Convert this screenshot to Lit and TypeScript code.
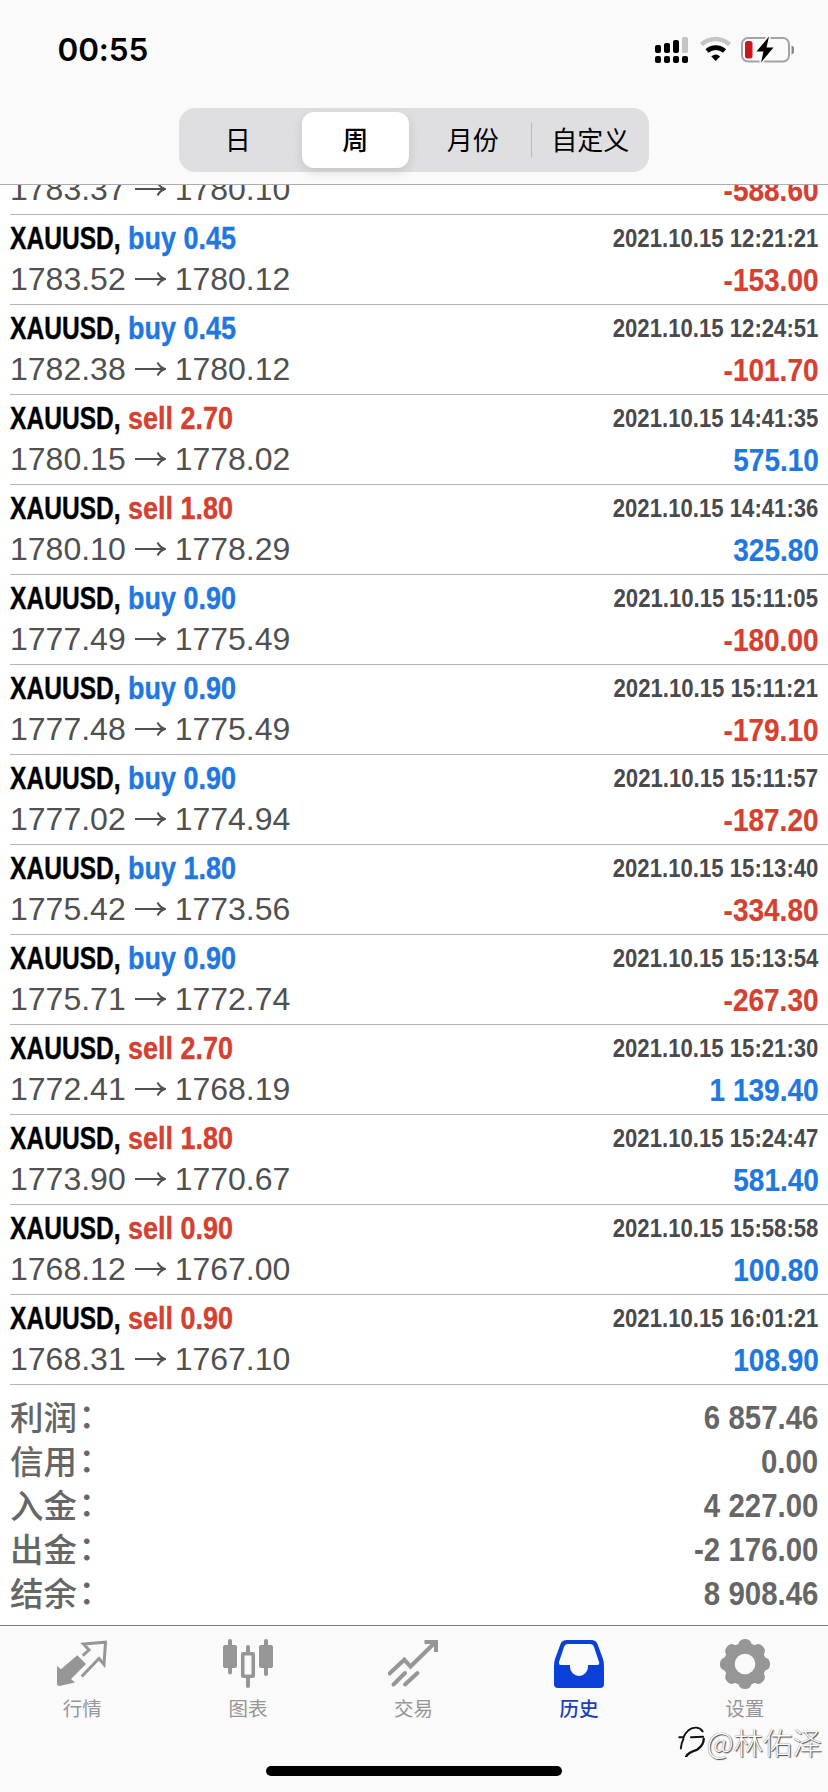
import { LitElement, html, css, svg, nothing } from "lit";
import { customElement, property } from "lit/decorators.js";

interface Deal {
  side?: "buy" | "sell";
  volume?: string;
  open: string;
  close: string;
  time?: string;
  profit: string;
}

const deal = (side: "buy" | "sell", volume: string, open: string, close: string, time: string, profit: string): Deal => ({
  side, volume, open, close, time: `2021.10.15 ${time}`, profit,
});

const DEALS: Deal[] = [
  { open: "1783.37", close: "1780.10", profit: "-588.60" },
  deal("buy", "0.45", "1783.52", "1780.12", "12:21:21", "-153.00"),
  deal("buy", "0.45", "1782.38", "1780.12", "12:24:51", "-101.70"),
  deal("sell", "2.70", "1780.15", "1778.02", "14:41:35", "575.10"),
  deal("sell", "1.80", "1780.10", "1778.29", "14:41:36", "325.80"),
  deal("buy", "0.90", "1777.49", "1775.49", "15:11:05", "-180.00"),
  deal("buy", "0.90", "1777.48", "1775.49", "15:11:21", "-179.10"),
  deal("buy", "0.90", "1777.02", "1774.94", "15:11:57", "-187.20"),
  deal("buy", "1.80", "1775.42", "1773.56", "15:13:40", "-334.80"),
  deal("buy", "0.90", "1775.71", "1772.74", "15:13:54", "-267.30"),
  deal("sell", "2.70", "1772.41", "1768.19", "15:21:30", "1 139.40"),
  deal("sell", "1.80", "1773.90", "1770.67", "15:24:47", "581.40"),
  deal("sell", "0.90", "1768.12", "1767.00", "15:58:58", "100.80"),
  deal("sell", "0.90", "1768.31", "1767.10", "16:01:21", "108.90"),
];

const TOTALS = [
  ["利润", "6 857.46"],
  ["信用", "0.00"],
  ["入金", "4 227.00"],
  ["出金", "-2 176.00"],
  ["结余", "8 908.46"],
];

@customElement("status-bar")
class StatusBar extends LitElement {
  static styles = css`
    :host { display: flex; height: 100px; padding: 0 34px 0 57.5px; box-sizing: border-box; justify-content: space-between; align-items: center; }
    .clock { font: 600 31.5px/40px Inter, sans-serif; letter-spacing: -0.1px; color: #000; }
    .icons { display: block; }
  `;
  render() {
    return html`
      <span class="clock">00:55</span>
      <svg class="icons" width="140" height="28" viewBox="654 36 140 28">
        <g fill="#000">
          <rect x="655" y="45" width="6" height="8" rx="2" /><rect x="664" y="43" width="6" height="10" rx="2" />
          <rect x="673" y="40" width="6" height="13" rx="2" />
          <rect x="655" y="56" width="6" height="7" rx="2" /><rect x="664" y="56" width="6" height="7" rx="2" />
          <rect x="673" y="56" width="6" height="7" rx="2" /><rect x="682" y="56" width="6" height="7" rx="2" />
        </g>
        <rect x="682" y="37" width="6" height="16" rx="1.5" fill="#c6c6c6" />
        <path d="M701.5 44.5A20.5 20.5 0 0 1 729.5 44.5" fill="none" stroke="#c6c6c6" stroke-width="4.6" />
        <path d="M707 51A13 13 0 0 1 724.5 51" fill="none" stroke="#000" stroke-width="4.6" />
        <path d="M711.3 56.5Q715.7 52.5 720.1 56.5L715.7 61Z" fill="#000" />
        <rect x="742" y="38" width="47" height="23.5" rx="6" fill="none" stroke="#a3a3a3" stroke-width="2" />
        <path d="M791.5 45.5Q795 47 795 50Q795 53 791.5 54.5Z" fill="#8a8a8a" />
        <rect x="745" y="41" width="7.5" height="17.5" rx="2.5" fill="#c9171e" />
        <path d="M769 36.5L756.5 51.5H763.5L761 62.5L773.5 47.5H766.5Z" fill="#000" stroke="#fafafa" stroke-width="3.5" paint-order="stroke" />
      </svg>
    `;
  }
}

@customElement("range-picker")
class RangePicker extends LitElement {
  static styles = css`
    :host { display: grid; grid-template-columns: repeat(4, 117.5px); width: 470px; height: 64px; box-sizing: border-box; padding: 4px 0; border-radius: 16px; background: #dfdfe1; }
    .seg { position: relative; display: flex; align-items: center; justify-content: center; margin: 0 5px; padding-bottom: 2px; border-radius: 12px; font: 400 26px/40px "Noto Sans CJK SC", sans-serif; color: #000; white-space: nowrap; }
    .seg.on { background: #fff; font-weight: 500; box-shadow: 0 4px 12px rgba(0, 0, 0, 0.12); }
    .bar { position: absolute; left: -6px; top: 10px; width: 1.5px; height: 36px; background: #bcbcc0; }
  `;
  render() {
    return html`
      <span class="seg">日</span>
      <span class="seg on">周</span>
      <span class="seg">月份</span>
      <span class="seg"><i class="bar"></i>自定义</span>
    `;
  }
}

@customElement("deal-row")
class DealRow extends LitElement {
  @property({ attribute: false }) deal!: Deal;
  static styles = css`
    :host { display: flex; justify-content: space-between; height: 90px; margin-left: 10px; padding: 0 10px 0 0; box-sizing: border-box; border-bottom: 1px solid #b4b4b6; font-family: "Liberation Sans", sans-serif; white-space: nowrap; }
    .left, .right { display: flex; flex-direction: column; }
    .right { align-items: flex-end; }
    .name { display: flex; height: 46px; font-weight: 700; font-size: 32px; line-height: 47px; color: #000; -webkit-text-stroke: 0.4px currentColor; }
    .symbol { width: 118px; transform: scaleX(0.768); transform-origin: left; }
    .side { transform: scaleX(0.843); transform-origin: left; }
    .buy, .gain { color: #1f78e0; }
    .sell, .loss { color: #d5402f; }
    .prices { display: flex; align-items: center; font-size: 32px; line-height: 36px; color: #505050; }
    .arrow { margin: 0 9px; }
    .time { height: 47px; font-weight: 700; font-size: 26px; line-height: 47px; color: #4a4a4c; transform: scaleX(0.852); transform-origin: right; }
    .profit { font-weight: 700; font-size: 32px; line-height: 36px; transform: scaleX(0.875); transform-origin: right; -webkit-text-stroke: 0.2px currentColor; margin-right: -1px; }
  `;
  render() {
    const { side, volume, open, close, time, profit } = this.deal;
    return html`
      <div class="left">
        <div class="name">
          ${side ? html`<span class="symbol">XAUUSD,</span><span class="side ${side}">${side} ${volume}</span>` : nothing}
        </div>
        <div class="prices">
          ${open}
          <svg class="arrow" width="31" height="18" viewBox="0 0 31 18" fill="none" stroke="#505050" stroke-width="2"><path d="M0 9H29.5M22.5 2.5Q25 7.5 30 9Q25 10.5 22.5 15.5" /></svg>
          ${close}
        </div>
      </div>
      <div class="right">
        <div class="time">${time ?? nothing}</div>
        <div class="profit ${profit.startsWith("-") ? "loss" : "gain"}">${profit}</div>
      </div>
    `;
  }
}

const GEAR = Array.from(
  { length: 8 },
  (_, i) => svg`<path d="M16.5 9L19.5 2.5Q21 0 25 0Q29 0 30.5 2.5L33.5 9Z" transform=${`rotate(${i * 45} 25 25)`} />`
);

const TABS = [
  {
    label: "行情",
    icon: svg`<path d="M0 27L4 30.3L20.3 16.3L29 25L14 40L18 43.6L2.5 47Q0.3 47 0 45Z" fill="currentColor" stroke="none" />
      <path d="M25.7 16.7L32 11L26.5 5L48.5 3.2L47 25.5L42 19.5L24.7 37.5" />`,
  },
  {
    label: "图表",
    icon: svg`<g fill="currentColor" stroke="none"><rect x="0" y="6" width="14" height="23" rx="2" /><rect x="5" y="0" width="4" height="35.5" rx="2" />
      <rect x="36" y="6" width="14" height="23" rx="2" /><rect x="41" y="0" width="4" height="37" rx="2" />
      <rect x="23" y="6" width="4" height="10" rx="2" /><rect x="23" y="37" width="4" height="12" rx="2" /></g><rect x="19.75" y="14.75" width="10.5" height="22.5" rx="0.5" stroke-width="3.6" />`,
  },
  {
    label: "交易",
    icon: svg`<g stroke-width="4"><path stroke-linecap="round" d="M1.5 34.5L16.3 20.7L22.5 27.5L46.5 4" /><path d="M36.5 3H48V13" /><path stroke-linecap="round" d="M5.5 45.5L17 34M17 45.5L29.5 34" /></g>`,
  },
  {
    label: "历史",
    icon: svg`<path fill-rule="evenodd" fill="currentColor" stroke="none" d="M13 1H37Q42 1 43.5 5L49 20Q50 23 50 27V45Q50 49 46 49H4Q0 49 0 45V27Q0 23 1 20L6.5 5Q8 1 13 1ZM14 5Q11 5 10 8L5 23Q4.5 26 7 26H16V28A9 9 0 0 0 34 28V26H43Q46 26 45 23L40 8Q39 5 36 5Z" />`,
  },
  {
    label: "设置",
    icon: svg`<g fill="currentColor" stroke="none">${GEAR}</g><circle cx="25" cy="25" r="15.7" stroke-width="10.8" />`,
  },
];

@customElement("tab-bar")
class TabBar extends LitElement {
  static styles = css`
    :host { position: relative; display: grid; grid-template-columns: repeat(5, 1fr); grid-template-rows: 124px 43px; height: 167px; border-top: 1px solid #7e7e80; background: #fafafa; box-sizing: border-box; }
    .tab { display: flex; flex-direction: column; align-items: center; padding: 13px 1px 0 0; color: #969696; }
    .tab.on { color: #0a3fd8; }
    .label { font: 400 19.5px/30px "Noto Sans CJK SC", sans-serif; margin-top: 4px; }
    .tab.on .label { font-weight: 500; color: #1a40bd; }
    .home { grid-column: 1 / -1; justify-self: center; margin-top: 16px; width: 296px; height: 10px; border-radius: 5px; background: #000; }
    .mark { position: absolute; right: 6px; top: 95px; display: flex; align-items: center; gap: 1px; font: 300 29.5px/40px "Noto Sans CJK SC", sans-serif; color: #fff; text-shadow: 1px 1px 1px #444, 0 0 1px #555; }
  `;
  render() {
    return html`
      ${TABS.map(
        (t, i) => html`<div class="tab ${i === 3 ? "on" : ""}">
          <svg width="50" height="50" viewBox="0 0 50 50" fill="none" stroke="currentColor" stroke-width="3">${t.icon}</svg>
          <span class="label">${t.label}</span>
        </div>`
      )}
      <div class="home"></div>
      <div class="mark">
        <svg width="28" height="32" viewBox="0 -1 26 30" fill="none" stroke="#111" stroke-width="1.8" stroke-linecap="round"><path d="M1 10.5H5Q9 2 16 1.5Q20 1 23 5M5 12Q3 16 2.5 21M12 10.5L23.5 10" /><path d="M24 12Q24 18 18 22Q9 25 7.5 28.500" stroke-width="2.2" /></svg>
        <span>@林佑泽</span>
      </div>
    `;
  }
}

@customElement("app-root")
class AppRoot extends LitElement {
  static styles = css`
    :host { display: flex; flex-direction: column; width: 828px; height: 1792px; background: #fff; overflow: hidden; }
    .head { display: flex; flex-direction: column; align-items: stretch; height: 185px; box-sizing: border-box; border-bottom: 1px solid #acacae; background: #fafafa; flex: none; }
    .picker { align-self: center; margin-top: 8px; }
    .list { display: flex; flex-direction: column; justify-content: flex-end; height: 1200px; overflow: hidden; flex: none; }
    .row { flex: none; }
    .totals { flex: 1; padding: 11px 10px 0 10px; }
    .total { display: flex; justify-content: space-between; height: 44px; color: #666; }
    .key { font: 500 33.5px/40px "Noto Sans CJK SC", sans-serif; }
    .colon { font-family: "Noto Sans CJK TC", sans-serif; margin-left: -7px; }
    .value { font: 700 33px/44px "Liberation Sans", sans-serif; transform: scaleX(0.892); transform-origin: right; }
  `;
  render() {
    return html`
      <div class="head"><status-bar></status-bar><range-picker class="picker"></range-picker></div>
      <div class="list">${DEALS.map((d) => html`<deal-row class="row" .deal=${d}></deal-row>`)}</div>
      <div class="totals">
        ${TOTALS.map(([k, v]) => html`<div class="total"><span class="key">${k}<span class="colon" lang="zh-TW">：</span></span><span class="value">${v}</span></div>`)}
      </div>
      <tab-bar></tab-bar>
    `;
  }
}
